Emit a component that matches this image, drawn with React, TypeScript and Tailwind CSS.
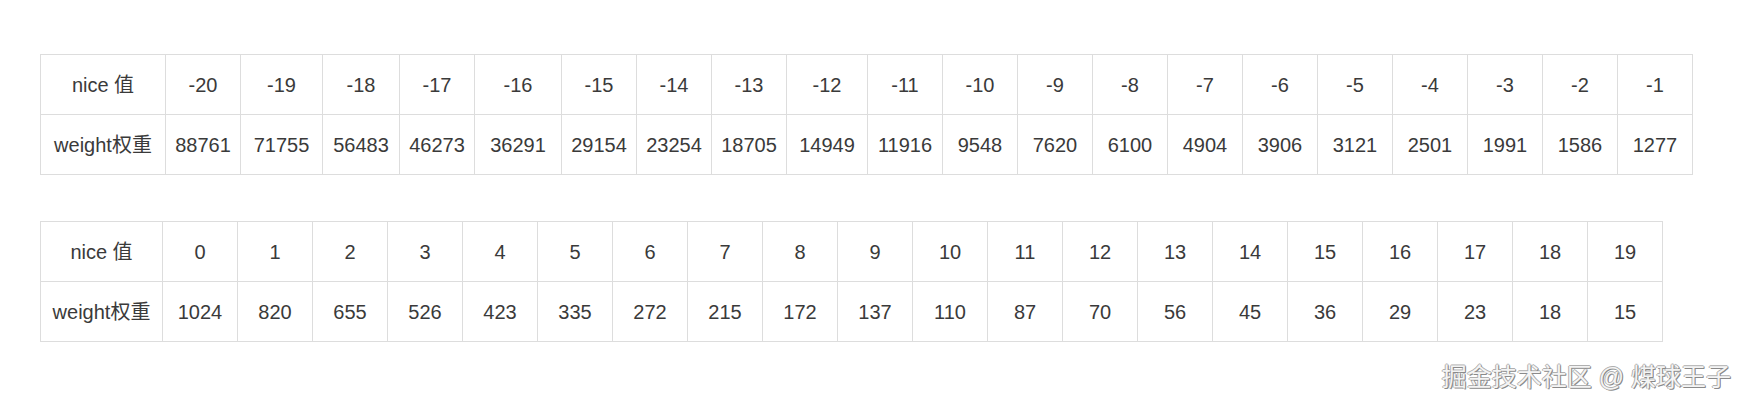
// nice 值 -> weight 权重 lookup tables

const row1Heads = ["-20", "-19", "-18", "-17", "-16", "-15", "-14", "-13", "-12", "-11", "-10", "-9", "-8", "-7", "-6", "-5", "-4", "-3", "-2", "-1"];
const row1Weights = ["88761", "71755", "56483", "46273", "36291", "29154", "23254", "18705", "14949", "11916", "9548", "7620", "6100", "4904", "3906", "3121", "2501", "1991", "1586", "1277"];
const row1Cols = [75, 82, 77, 75, 87, 75, 75, 75, 81, 75, 75, 75, 75, 75, 75, 75, 75, 75, 75, 75];

const row2Heads = Array.from({ length: 20 }, (_, i) => String(i));
const row2Weights = ["1024", "820", "655", "526", "423", "335", "272", "215", "172", "137", "110", "87", "70", "56", "45", "36", "29", "23", "18", "15"];

const cell = "h-[60px] border border-[#dddddd] p-0 text-center align-middle";

const NiceTable = ({
  heads,
  weights,
  firstCol,
  cols,
  className,
}: {
  heads: string[];
  weights: string[];
  firstCol: number;
  cols: number[];
  className?: string;
}) => {
  const total = firstCol + cols.reduce((a, b) => a + b, 0) + 1;
  return (
    <table
      className={`table-fixed border-collapse text-[20px] text-[#3a3a3a] ${className ?? ""}`}
      style={{ width: total }}
    >
      <colgroup>
        <col style={{ width: firstCol }} />
        {cols.map((w, i) => (
          <col key={i} style={{ width: w }} />
        ))}
      </colgroup>
      <tbody>
        <tr>
          <td className={cell}>nice 值</td>
          {heads.map((h) => (
            <td key={h} className={cell}>
              {h}
            </td>
          ))}
        </tr>
        <tr>
          <td className={cell}>weight权重</td>
          {weights.map((w, i) => (
            <td key={i} className={cell}>
              {w}
            </td>
          ))}
        </tr>
      </tbody>
    </table>
  );
};

export default function App() {
  return (
    <div className="h-[407px] w-[1745px] bg-white pt-[54px] font-['Liberation_Sans','Noto_Sans_CJK_SC',sans-serif]">
      <div className="pl-10">
        <NiceTable heads={row1Heads} weights={row1Weights} firstCol={125} cols={row1Cols} />
        <NiceTable
          heads={row2Heads}
          weights={row2Weights}
          firstCol={122}
          cols={Array(20).fill(75)}
          className="mt-[46px]"
        />
      </div>

      {/* watermark */}
      <div className="mt-[19px] flex justify-end pr-[14px]">
        <span className="text-[25px] leading-[33px] text-[#f4f4f4] [text-shadow:1px_1px_0_#8a8a8a,-1px_0_0_#b0b0b0,0_-1px_0_#b0b0b0,1px_0_0_#a0a0a0]">
          掘金技术社区 @ 煤球王子
        </span>
      </div>
    </div>
  );
}
